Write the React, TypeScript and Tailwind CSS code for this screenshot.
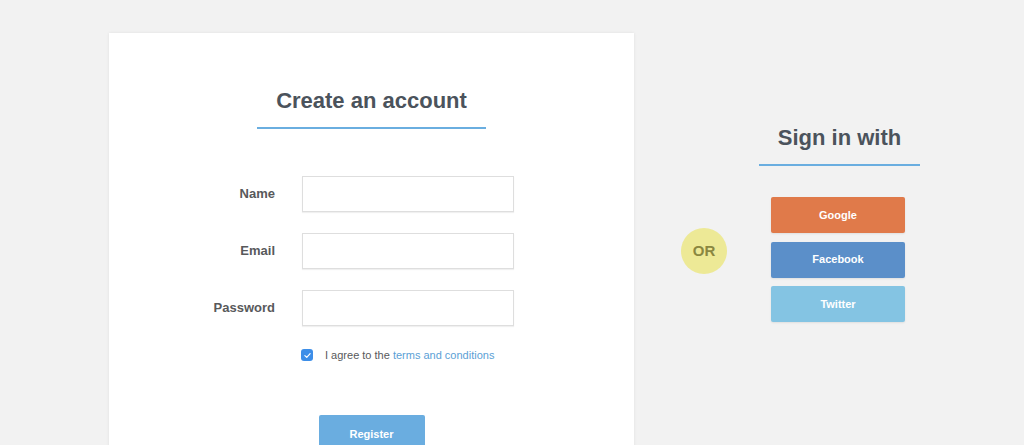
import { useState } from "react";

const fields = ["Name", "Email", "Password"];

const providers = [
  { name: "Google", className: "bg-[#e07a4a]" },
  { name: "Facebook", className: "bg-[#5b8fc9]" },
  { name: "Twitter", className: "bg-[#84c4e3]" },
];

export default function App() {
  const [agreed, setAgreed] = useState(true);

  return (
    <div
      className="h-[445px] overflow-hidden bg-[#f2f2f2] text-[#4b535c]"
      style={{ fontFamily: '"Liberation Sans", Arial, sans-serif' }}
    >
      <div className="flex items-start pl-[109px] pt-[33px]">
        {/* register card */}
        <div className="w-[525px] h-[440px] shrink-0 bg-white shadow-[0_0_3px_rgba(0,0,0,0.08)] flex flex-col items-center pt-[54px]">
          <h1 className="text-[22px] leading-[28px] font-bold text-[#4b535c]">Create an account</h1>
          <div className="mt-[12px] h-[2px] w-[229px] bg-[#6aaee0]" />

          <div className="mt-[47px] w-full flex flex-col gap-[21px]">
            {fields.map((field) => (
              <div key={field} className="flex items-center">
                <label className="w-[166px] text-right text-[13px] font-bold text-[#58595b]">{field}</label>
                <input
                  type={field === "Password" ? "password" : "text"}
                  className="ml-[27px] w-[212px] h-[36px] border border-[#dedede] bg-white shadow-[0_1px_1px_rgba(0,0,0,0.06)] outline-none px-2 text-sm"
                />
              </div>
            ))}
          </div>

          <div className="mt-[21px] w-full flex items-center pl-[192px]">
            <button
              type="button"
              onClick={() => setAgreed(!agreed)}
              className={`w-[12px] h-[12px] rounded-[3px] flex items-center justify-center ${agreed ? "bg-[#3d8ee8]" : "border border-[#bbb] bg-white"}`}
            >
              {agreed ? (
                <svg viewBox="0 0 12 12" className="w-[9px] h-[9px]">
                  <path d="M2.5 6.2 L5 8.5 L9.5 3.5" fill="none" stroke="white" strokeWidth="1.6" strokeLinecap="round" strokeLinejoin="round" />
                </svg>
              ) : null}
            </button>
            <span className="ml-[12px] text-[11px] text-[#58595b]">
              I agree to the <a className="text-[#5b9fd6]">terms and conditions</a>
            </span>
          </div>

          <button
            type="button"
            className="mt-[51px] w-[106px] h-[40px] rounded-[2px] bg-[#6aade0] text-white text-[11px] font-bold"
          >
            Register
          </button>
        </div>

        {/* or */}
        <div className="ml-[47px] mt-[195px] w-[46px] h-[46px] shrink-0 rounded-full bg-[#ede996] flex items-center justify-center text-[15px] font-bold text-[#8a8740]">
          OR
        </div>

        {/* social */}
        <div className="ml-[32px] mt-[91px] w-[161px] flex flex-col">
          <h2 className="text-center text-[22px] leading-[28px] font-bold text-[#4b535c]">Sign in with</h2>
          <div className="mt-[12px] h-[2px] w-full bg-[#6aaee0]" />
          <div className="mt-[31px] pl-[12px] flex flex-col gap-[8.5px]">
            {providers.map((p) => (
              <button
                key={p.name}
                type="button"
                className={`w-[134px] h-[36px] rounded-[2px] text-white text-[11px] font-bold shadow-[0_1px_2px_rgba(0,0,0,0.08)] ${p.className}`}
              >
                {p.name}
              </button>
            ))}
          </div>
        </div>
      </div>
    </div>
  );
}
